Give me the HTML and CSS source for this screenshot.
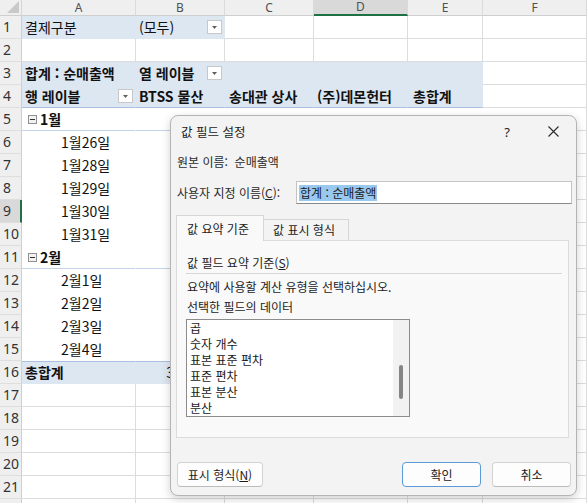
FILE: index.html
```html
<!DOCTYPE html>
<html lang="ko">
<head>
<meta charset="utf-8">
<title>값 필드 설정</title>
<link rel="stylesheet" href="styles.css">
</head>
<body>
<div class="sheet">
  <div class="corner"><svg class="tri" width="12" height="12" viewBox="0 0 12 12"><path d="M12 0 L12 12 L0 12 Z" fill="#c9c9c9"/></svg></div>
  <div class="ch">A</div><div class="ch">B</div><div class="ch">C</div><div class="ch sel">D</div><div class="ch">E</div><div class="ch">F</div>

  <div class="rh">1</div><div class="c b">결제구분</div><div class="c b dc"><span>(모두)</span><span class="dd"><svg width="5" height="3" viewBox="0 0 5 3"><path d="M0 0 H5 L2.5 3 Z" fill="#606060"/></svg></span></div><div class="c"></div><div class="c"></div><div class="c"></div><div class="c"></div>

  <div class="rh">2</div><div class="c"></div><div class="c"></div><div class="c"></div><div class="c"></div><div class="c"></div><div class="c"></div>

  <div class="rh">3</div><div class="c b bold">합계 : 순매출액</div><div class="c b bold dc"><span>열 레이블</span><span class="dd"><svg width="5" height="3" viewBox="0 0 5 3"><path d="M0 0 H5 L2.5 3 Z" fill="#606060"/></svg></span></div><div class="c b"></div><div class="c b"></div><div class="c b"></div><div class="c"></div>

  <div class="rh">4</div><div class="c b bold dc b4"><span>행 레이블</span><span class="dd"><svg width="5" height="3" viewBox="0 0 5 3"><path d="M0 0 H5 L2.5 3 Z" fill="#606060"/></svg></span></div><div class="c b bold b4">BTSS 물산</div><div class="c b bold b4 p4">송대관 상사</div><div class="c b bold b4">(주)데몬헌터</div><div class="c b bold b4 p5">총합계</div><div class="c"></div>

  <div class="rh">5</div><div class="c p bl bold grp"><span class="minus"></span>1월</div><div class="c p bl"></div><div class="c p bl"></div><div class="c p bl"></div><div class="c p bl"></div><div class="c"></div>

  <div class="rh">6</div><div class="c p ind">1월26일</div><div class="c p"></div><div class="c p"></div><div class="c p"></div><div class="c p"></div><div class="c"></div>
  <div class="rh">7</div><div class="c p ind">1월28일</div><div class="c p"></div><div class="c p"></div><div class="c p"></div><div class="c p"></div><div class="c"></div>
  <div class="rh">8</div><div class="c p ind">1월29일</div><div class="c p"></div><div class="c p"></div><div class="c p"></div><div class="c p"></div><div class="c"></div>
  <div class="rh rsel">9</div><div class="c p ind">1월30일</div><div class="c p"></div><div class="c p"></div><div class="c p"></div><div class="c p"></div><div class="c"></div>
  <div class="rh">10</div><div class="c p ind">1월31일</div><div class="c p"></div><div class="c p"></div><div class="c p"></div><div class="c p"></div><div class="c"></div>

  <div class="rh">11</div><div class="c p bl bold grp"><span class="minus"></span>2월</div><div class="c p bl"></div><div class="c p bl"></div><div class="c p bl"></div><div class="c p bl"></div><div class="c"></div>

  <div class="rh">12</div><div class="c p ind">2월1일</div><div class="c p"></div><div class="c p"></div><div class="c p"></div><div class="c p"></div><div class="c"></div>
  <div class="rh">13</div><div class="c p ind">2월2일</div><div class="c p"></div><div class="c p"></div><div class="c p"></div><div class="c p"></div><div class="c"></div>
  <div class="rh">14</div><div class="c p ind">2월3일</div><div class="c p"></div><div class="c p"></div><div class="c p"></div><div class="c p"></div><div class="c"></div>
  <div class="rh">15</div><div class="c p ind">2월4일</div><div class="c p"></div><div class="c p"></div><div class="c p"></div><div class="c p"></div><div class="c"></div>

  <div class="rh">16</div><div class="c b bold bt">총합계</div><div class="c b bt val">3,245,000</div><div class="c b bt"></div><div class="c b bt"></div><div class="c b bt"></div><div class="c"></div>

  <div class="rh">17</div><div class="c"></div><div class="c"></div><div class="c"></div><div class="c"></div><div class="c"></div><div class="c"></div>
  <div class="rh">18</div><div class="c"></div><div class="c"></div><div class="c"></div><div class="c"></div><div class="c"></div><div class="c"></div>
  <div class="rh">19</div><div class="c"></div><div class="c"></div><div class="c"></div><div class="c"></div><div class="c"></div><div class="c"></div>
  <div class="rh">20</div><div class="c"></div><div class="c"></div><div class="c"></div><div class="c"></div><div class="c"></div><div class="c"></div>
  <div class="rh">21</div><div class="c"></div><div class="c"></div><div class="c"></div><div class="c"></div><div class="c"></div><div class="c"></div>
  <div class="rh">22</div><div class="c"></div><div class="c"></div><div class="c"></div><div class="c"></div><div class="c"></div><div class="c"></div>
</div>

<div class="dlg">
  <div class="title">
    <span class="ttext">값 필드 설정</span>
    <span class="help">?</span>
    <span class="close"><svg width="11" height="11" viewBox="0 0 11 11"><path d="M0.5 0.5 L10.5 10.5 M10.5 0.5 L0.5 10.5" stroke="#2b2b2b" stroke-width="1.1" fill="none"/></svg></span>
  </div>
  <div class="body">
    <div class="src">원본 이름:&nbsp; 순매출액</div>
    <div class="custom">
      <span class="clabel">사용자 지정 이름(<u>C</u>):</span>
      <div class="input"><span class="hl">합계 : 순매출액</span></div>
    </div>
    <div class="tabs">
      <div class="tab on">값 요약 기준</div>
      <div class="tab">값 표시 형식</div>
    </div>
    <div class="panel">
      <div class="ph">값 필드 요약 기준(<u>S</u>)</div>
      <div class="pt">요약에 사용할 계산 유형을 선택하십시오.</div>
      <div class="pt">선택한 필드의 데이터</div>
      <div class="list">
        <div class="items">
          <div>곱</div>
          <div>숫자 개수</div>
          <div>표본 표준 편차</div>
          <div>표준 편차</div>
          <div>표본 분산</div>
          <div>분산</div>
        </div>
        <div class="track"><div class="thumb"></div></div>
      </div>
    </div>
    <div class="btns">
      <div class="btn wide">표시 형식(<u>N</u>)</div>
      <div class="spacer"></div>
      <div class="btn def">확인</div>
      <div class="btn">취소</div>
    </div>
  </div>
</div>
</body>
</html>
```
FILE: styles.css
```css
html, body {
  margin: 0;
  padding: 0;
  background: #ffffff;
  overflow: hidden;
}
body {
  width: 587px;
  height: 503px;
  position: relative;
  font-family: "Noto Sans CJK KR", "Noto Sans", sans-serif;
}
.sheet {
  display: grid;
  grid-template-columns: 22px 114px 89px 89px 94px 75px 104px;
  grid-template-rows: 16px;
  grid-auto-rows: 23px;
}
.corner {
  background: #efefef;
  border-right: 1px solid #d6d6d6;
  border-bottom: 1px solid #cfcfcf;
  box-sizing: border-box;
  display: flex;
  align-items: flex-end;
  justify-content: flex-end;
  padding: 0 2px 2px 0;
}
.tri { display: block; }
.ch {
  background: #efefef;
  border-right: 1px solid #dadada;
  border-bottom: 1px solid #cfcfcf;
  box-sizing: border-box;
  font-family: "Noto Sans", sans-serif;
  font-size: 12px;
  line-height: 15px;
  color: #505050;
  text-align: center;
}
.ch.sel {
  background: #d9d9d9;
  border-bottom: 2px solid #1e7145;
  line-height: 14px;
}
.rh {
  background: #efefef;
  border-right: 1px solid #cfcfcf;
  border-bottom: 1px solid #dedede;
  box-sizing: border-box;
  font-family: "Noto Sans", sans-serif;
  font-size: 14px;
  line-height: 22px;
  color: #333333;
  padding-left: 3px;
  overflow: hidden;
  white-space: nowrap;
}
.rh.rsel {
  background: #d9d9d9;
  border-right: 2px solid #1e7145;
}
.c {
  border-right: 1px solid #dcdcdc;
  border-bottom: 1px solid #dcdcdc;
  box-sizing: border-box;
  background: #ffffff;
  font-size: 14px;
  line-height: 22px;
  color: #111111;
  padding-left: 3px;
  white-space: nowrap;
  overflow: hidden;
}
.b {
  background: #dde7f2;
  border-right-color: #dde7f2;
  border-bottom-color: #dde7f2;
}
.p {
  border-right-color: #ffffff;
  border-bottom-color: #ffffff;
}
.bold { font-weight: 700; }
.b4 { border-bottom-color: #a9c0df; }
.bl { border-bottom-color: #c3d4ea; }
.bt { border-top: 1px solid #a9c0df; line-height: 21px; }
.p4 { padding-left: 4px; }
.p5 { padding-left: 5px; }
.dc {
  display: flex;
  align-items: center;
  justify-content: space-between;
  padding-right: 2px;
}
.dd {
  width: 15px;
  height: 14px;
  box-sizing: border-box;
  background: #ffffff;
  border: 1px solid #c8c8c8;
  display: flex;
  align-items: center;
  justify-content: center;
}
.dd svg { display: block; }
.grp {
  display: flex;
  align-items: center;
  padding-left: 6px;
}
.minus {
  width: 9px;
  height: 9px;
  box-sizing: border-box;
  border: 1px solid #8f8f8f;
  background: #f2f2f2;
  margin-right: 3px;
  display: flex;
  align-items: center;
  justify-content: center;
}
.minus::before {
  content: "";
  width: 5px;
  height: 1px;
  background: #333333;
}
.ind { padding-left: 39px; }
.val {
  text-align: right;
  padding-right: 0;
  letter-spacing: -0.5px;
}

/* dialog */
.dlg {
  position: absolute;
  left: 170px;
  top: 115px;
  width: 407px;
  height: 381px;
  box-sizing: border-box;
  background: #f3f3f3;
  border: 1px solid #b4b4b4;
  border-radius: 8px;
  box-shadow: 0 3px 10px rgba(0, 0, 0, 0.18);
  font-family: "Noto Sans CJK KR", "Noto Sans", sans-serif;
  font-size: 12px;
  color: #1b1b1b;
}
.title {
  display: flex;
  align-items: center;
  height: 31px;
  padding-left: 10px;
}
.ttext { flex: 1; font-size: 12.5px; }
.help {
  width: 46px;
  text-align: center;
  font-family: "Noto Sans", sans-serif;
  font-size: 13px;
  color: #222222;
}
.close {
  width: 46px;
  display: flex;
  justify-content: center;
}
.close svg { display: block; }
.body {
  padding: 0 4px 0 6px;
}
.src {
  margin-top: 5px;
  height: 20px;
  line-height: 20px;
  color: #2a2a2a;
}
.custom {
  display: flex;
  align-items: center;
  margin-top: 9px;
  height: 23px;
}
.clabel {
  width: 119px;
  flex: none;
  color: #2a2a2a;
}
.input {
  width: 276px;
  height: 23px;
  box-sizing: border-box;
  background: #ffffff;
  border: 1px solid #c4c4c4;
  border-bottom-color: #8a8a8a;
  padding: 2px 0 0 2px;
}
.hl {
  display: inline-block;
  height: 16px;
  line-height: 16px;
  background: #99c9ef;
  padding: 0 1px;
  color: #1a1a1a;
}
.tabs {
  display: flex;
  align-items: flex-end;
  margin-top: 11px;
  margin-left: -1px;
  height: 26px;
  position: relative;
  z-index: 1;
}
.tab {
  box-sizing: border-box;
  height: 21px;
  line-height: 20px;
  width: 85px;
  padding-left: 9px;
  border: 1px solid #d6d6d6;
  border-left: none;
  border-bottom: none;
  background: #f3f3f3;
  margin-bottom: 1px;
  color: #222222;
}
.tab.on {
  height: 26px;
  line-height: 25px;
  width: 88px;
  padding-left: 10px;
  border-left: 1px solid #d6d6d6;
  background: #f9f9f9;
  margin-bottom: 0;
}
.panel {
  margin-top: -1px;
  margin-left: -1px;
  width: 393px;
  height: 198px;
  box-sizing: border-box;
  background: #f9f9f9;
  border: 1px solid #dcdcdc;
  padding: 0 6px 0 10px;
}
.ph {
  margin-top: 11px;
  margin-left: -1px;
  padding-left: 1px;
  height: 21px;
  line-height: 21px;
  border-bottom: 1px solid #d8d8d8;
  color: #222222;
}
.pt {
  height: 20px;
  line-height: 20px;
  color: #222222;
}
.ph + .pt { margin-top: 3px; }
.list {
  margin-top: 2px;
  margin-left: -1px;
  width: 224px;
  height: 98px;
  box-sizing: border-box;
  background: #ffffff;
  border: 1px solid #8c8c8c;
  display: flex;
}
.items {
  flex: 1;
  padding: 0 0 0 3px;
  line-height: 16px;
  color: #1a1a1a;
  overflow: hidden;
}
.track {
  width: 16px;
  background: #f2f2f2;
  position: relative;
}
.thumb {
  position: absolute;
  left: 6px;
  top: 45px;
  width: 4px;
  height: 34px;
  border-radius: 2px;
  background: #858585;
}
.btns {
  display: flex;
  margin-top: 24px;
  margin-right: 1px;
  gap: 11px;
}
.spacer { flex: 1; }
.btn {
  width: 79px;
  height: 25px;
  box-sizing: border-box;
  background: #fdfdfd;
  border: 1px solid #d3d3d3;
  border-bottom-color: #bcbcbc;
  border-radius: 4px;
  text-align: center;
  line-height: 23px;
  color: #1b1b1b;
}
.btn.wide { width: 86px; }
.btn.def {
  border: 1px solid #5b9ad6;
}
```
